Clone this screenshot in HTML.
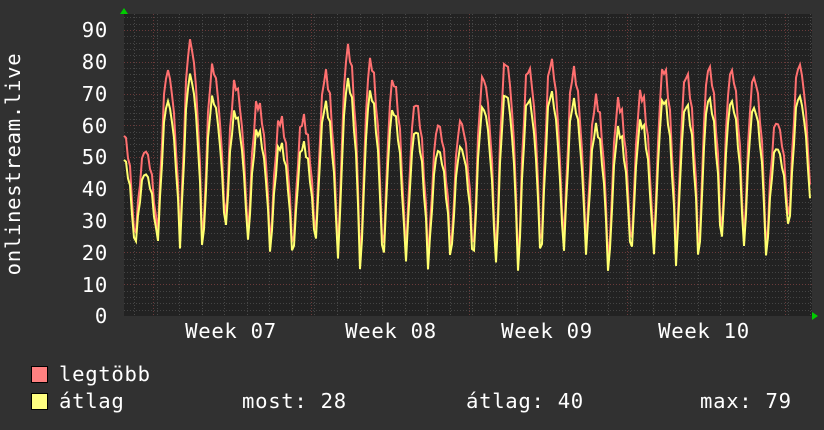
<!DOCTYPE html>
<html><head><meta charset="utf-8"><style>
html,body{margin:0;padding:0;background:#313131;}
svg{display:block}
text{font-family:"DejaVu Sans Mono","Liberation Mono",monospace;fill:#fff;font-size:20.6px;letter-spacing:0.7px}
</style></head><body>
<svg id="g" width="824" height="430" xmlns="http://www.w3.org/2000/svg">
<rect width="824" height="430" fill="#313131"/>
<rect x="124" y="14" width="688" height="302" fill="#222"/>
<g id="grid"></g>
<g id="data"></g>
<g>
<text x="108" y="37" text-anchor="end">90</text>
<text x="108" y="69" text-anchor="end">80</text>
<text x="108" y="101" text-anchor="end">70</text>
<text x="108" y="133" text-anchor="end">60</text>
<text x="108" y="164" text-anchor="end">50</text>
<text x="108" y="196" text-anchor="end">40</text>
<text x="108" y="228" text-anchor="end">30</text>
<text x="108" y="260" text-anchor="end">20</text>
<text x="108" y="292" text-anchor="end">10</text>
<text x="108" y="323" text-anchor="end">0</text>
<text x="231" y="338" text-anchor="middle">Week 07</text>
<text x="391" y="338" text-anchor="middle">Week 08</text>
<text x="547" y="338" text-anchor="middle">Week 09</text>
<text x="704" y="338" text-anchor="middle">Week 10</text>
<text transform="translate(20,164) rotate(-90)" text-anchor="middle">onlinestream.live</text>
<rect x="31.5" y="366.5" width="16" height="16" fill="#ff8080" stroke="#000"/>
<rect x="31.5" y="393.5" width="16" height="16" fill="#ffff80" stroke="#000"/>
<text x="59" y="381">legtöbb</text>
<text x="59" y="408">átlag</text>
<text x="242" y="408">most: 28</text>
<text x="466" y="408">átlag: 40</text>
<text x="700" y="408">max: 79</text>
</g>
<polygon points="120,14 128,14 124,8" fill="#00cc00"/>
<polygon points="812,312 812,320 818,316" fill="#00cc00"/>
</svg>
<script>
var NS="http://www.w3.org/2000/svg";
var grid=document.getElementById('grid'),data=document.getElementById('data');
function ln(x1,y1,x2,y2,c,d){var l=document.createElementNS(NS,'line');l.setAttribute('x1',x1);l.setAttribute('y1',y1);l.setAttribute('x2',x2);l.setAttribute('y2',y2);l.setAttribute('stroke',c);l.setAttribute('stroke-width',1);if(d)l.setAttribute('stroke-dasharray',d);grid.appendChild(l);}
function Y(v){return 316-v*3.178;}
for(var v=2;v<=94;v+=2){var y=Math.round(Y(v))+0.5;ln(124,y,812,y,v%10==0?'#6a3a3a':'#444','1,2');}
for(var x=124+10;x<812;x+=22.55){var xx=Math.round(x)+0.5;ln(xx,14,xx,316,'#484848','1,2');}
[153,311,469,627,785].forEach(function(x){ln(x+0.5,14,x+0.5,316,'#6a3a3a','1,2');});
var peaks=[[58,40],[52,22],[77,22],[86,22],[78,20],[73,26],[67,24],[62,22],[62,18],[76,22],[84,18],[80,15],[74,15],[67,16],[60,16],[61,18],[75,17],[80,16],[78,16],[80,16],[77,18],[68,20],[67,14],[70,18],[78,18],[76,17],[78,16],[77,22],[75,22],[61,21],[79,27]];
var red=[],yel=[];
for(var x=124;x<=811;x+=2){
 var t=(x-124+12)/22.55;var i=Math.floor(t);var ph=t-i;
 var p=peaks[Math.min(i,peaks.length-1)],tr=peaks[Math.min(i+1,peaks.length-1)][1];
 var s=ph<0.45?Math.pow(Math.sin(ph/0.45*Math.PI/2),1.3):Math.pow(Math.cos((ph-0.45)/0.55*Math.PI/2),0.7);
 var base=ph<0.45?p[1]:tr;
 var j=Math.sin(x*1.7)*2;
 var r=base+(p[0]-base)*s+(s>0.2?j:0);
 var a=base-2+(p[0]*0.9-base)*s+(s>0.2?j*0.8:0);
 red.push(x+','+Y(r).toFixed(1));yel.push(x+','+Y(Math.min(a,r)).toFixed(1));
}
function pl(pts,c){var p=document.createElementNS(NS,'polyline');p.setAttribute('points',pts.join(' '));p.setAttribute('fill','none');p.setAttribute('stroke',c);p.setAttribute('stroke-width',2);data.appendChild(p);}
pl(red,'#ff7070');pl(yel,'#ffff70');
</script>
</body></html>
